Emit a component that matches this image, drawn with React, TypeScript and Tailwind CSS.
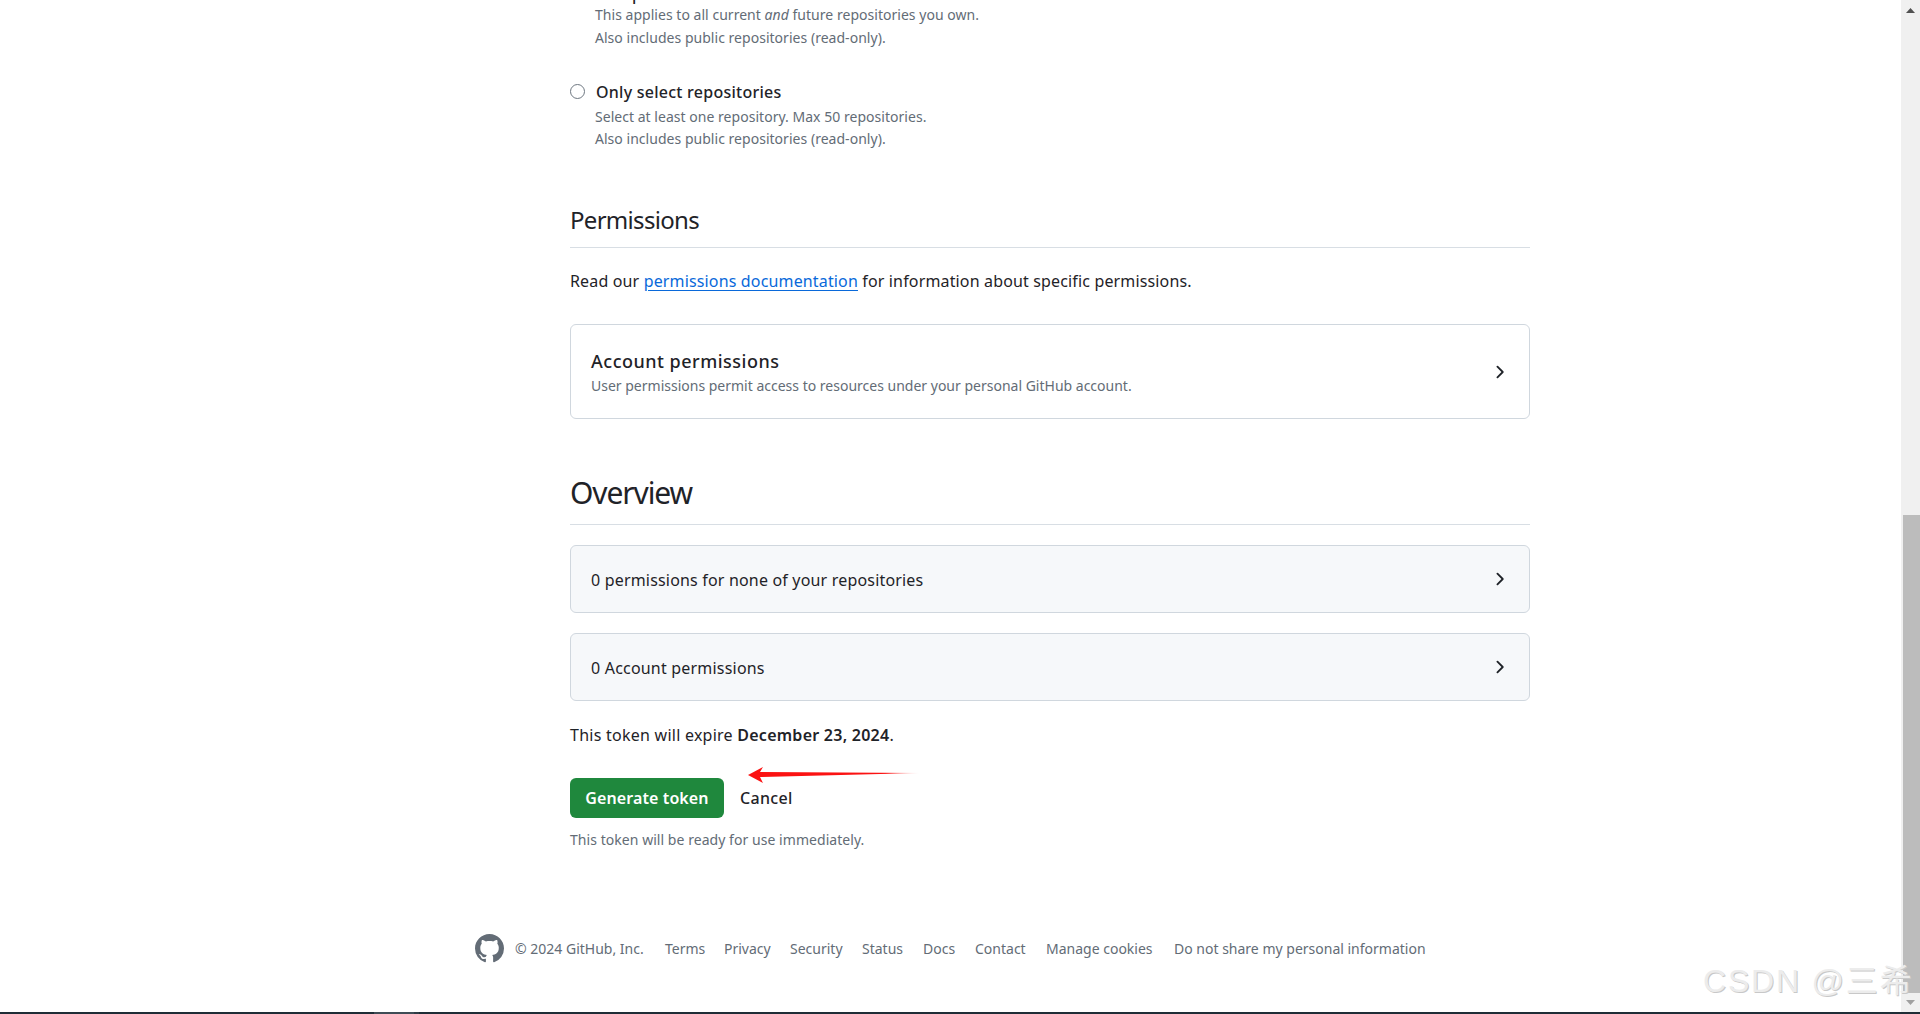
import React from "react";

const Chevron = () => (
  <svg viewBox="0 0 16 16" className="w-5 h-5 fill-[#1f2328] shrink-0">
    <path d="M6.22 3.22a.75.75 0 0 1 1.06 0l4.25 4.25a.75.75 0 0 1 0 1.06l-4.25 4.25a.751.751 0 0 1-1.042-.018.751.751 0 0 1-.018-1.042L9.94 8 6.22 4.28a.75.75 0 0 1 0-1.06Z" />
  </svg>
);

const links = [
  ["Terms", "w-[59px]"],
  ["Privacy", "w-[66px]"],
  ["Security", "w-[72px]"],
  ["Status", "w-[61px]"],
  ["Docs", "w-[52px]"],
  ["Contact", "w-[71px]"],
  ["Manage cookies", "w-[128px]"],
  ["Do not share my personal information", "w-[260px]"],
];

export default function App() {
  return (
    <div className="relative h-[1014px] overflow-hidden bg-white flex flex-col font-['Noto_Sans','Open_Sans',sans-serif] text-[#1f2328]">
      <div className="flex flex-1 min-h-0">
        <div className="flex-1 min-w-0 flex flex-col overflow-hidden">
          <div className="ml-[570px] w-[960px] -mt-[17px] flex flex-col">
            <div className="ml-[25px] text-[16px] leading-[22px] font-medium h-[21px] tracking-[-0.3px]">All repositories</div>
            <div className="ml-[25px] text-[14px] leading-[22px] text-[#636c76] tracking-[0.03px]">
              <div>This applies to all current <em>and</em> future repositories you own.</div>
              <div className="mt-[1px]">Also includes public repositories (read-only).</div>
            </div>

            <div className="mt-[32px] flex items-center h-[22px]">
              <span className="w-[15px] h-[15px] -mt-[2px] rounded-full border border-[#6e7781] bg-white shrink-0" />
              <span className="ml-[11px] text-[16px] font-medium tracking-[0.25px]">Only select repositories</span>
            </div>
            <div className="ml-[25px] mt-[3px] text-[14px] leading-[22px] text-[#636c76] tracking-[0.03px]">
              <div>Select at least one repository. Max 50 repositories.</div>
              <div>Also includes public repositories (read-only).</div>
            </div>

            <div className="mt-[49px] h-[49px] flex items-center border-b border-[#d8dee4] text-[24px] leading-[32px] tracking-[-0.7px]">
              <span className="-mt-[6px]">Permissions</span>
            </div>
            <p className="mt-[21px] text-[16px] leading-[24px] tracking-[0.15px]">
              Read our <a className="text-[#0969da] underline underline-offset-[3px]">permissions documentation</a> for information about specific permissions.
            </p>

            <div className="mt-[31px] h-[95px] rounded-md border border-[#d0d7de] pl-[20px] pr-[20px] flex items-center justify-between">
              <div className="flex flex-col gap-[3px] pt-[2px]">
                <div className="text-[18px] leading-[24px] font-medium tracking-[0.5px]">Account permissions</div>
                <div className="text-[14px] leading-[20px] text-[#636c76]">User permissions permit access to resources under your personal GitHub account.</div>
              </div>
              <Chevron />
            </div>

            <div className="mt-[54px] h-[52px] flex items-center border-b border-[#d8dee4] text-[30px] leading-[40px] tracking-[-1.1px]">
              <span className="-mt-[12px]">Overview</span>
            </div>

            <div className="mt-[20px] h-[68px] rounded-md border border-[#d0d7de] bg-[#f6f8fa] pl-[20px] pr-[20px] flex items-center justify-between text-[16px] tracking-[0.18px]">
              <span className="mt-[1px]">0 permissions for none of your repositories</span>
              <Chevron />
            </div>
            <div className="mt-[20px] h-[68px] rounded-md border border-[#d0d7de] bg-[#f6f8fa] pl-[20px] pr-[20px] flex items-center justify-between text-[16px] tracking-[0.2px]">
              <span className="mt-[1px]">0 Account permissions</span>
              <Chevron />
            </div>

            <p className="mt-[22px] text-[16px] leading-[24px] tracking-[0.25px]">
              This token will expire <strong className="font-semibold">December 23, 2024</strong>.
            </p>

            <div className="mt-[31px] flex items-center">
              <button className="w-[154px] h-[40px] rounded-md bg-[#1f883d] text-white text-[16px] font-semibold tracking-[0.1px]">Generate token</button>
              <span className="ml-[16px] text-[16px] font-medium tracking-[0.3px]">Cancel</span>
            </div>
            <p className="mt-[12px] text-[14px] leading-[20px] text-[#636c76] tracking-[0.05px]">This token will be ready for use immediately.</p>
          </div>

          <footer className="mt-[84px] ml-[475px] flex items-center text-[14px] leading-[20px] text-[#636c76]">
            <svg viewBox="0 0 16 16" className="w-[29px] h-[29px] fill-[#636c76] shrink-0">
              <path d="M8 0c4.42 0 8 3.58 8 8a8.013 8.013 0 0 1-5.45 7.59c-.4.08-.55-.17-.55-.38 0-.27.01-1.13.01-2.2 0-.75-.25-1.23-.54-1.48 1.78-.2 3.65-.88 3.65-3.95 0-.88-.31-1.59-.82-2.15.08-.2.36-1.02-.08-2.12 0 0-.67-.22-2.2.82-.64-.18-1.32-.27-2-.27-.68 0-1.36.09-2 .27-1.53-1.03-2.2-.82-2.2-.82-.44 1.1-.16 1.92-.08 2.12-.51.56-.82 1.28-.82 2.15 0 3.06 1.86 3.75 3.64 3.95-.23.2-.44.55-.51 1.07-.46.21-1.61.55-2.33-.66-.15-.24-.6-.83-1.23-.82-.67.01-.27.38.01.53.34.19.73.9.82 1.13.16.45.68 1.31 2.69.94 0 .67.01 1.3.01 1.49 0 .21-.15.45-.55.38A7.995 7.995 0 0 1 0 8c0-4.42 3.58-8 8-8Z" />
            </svg>
            <span className="ml-[11px] w-[150px] shrink-0 whitespace-nowrap">© 2024 GitHub, Inc.</span>
            {links.map(([label, w]) => (
              <a key={label} className={`${w} shrink-0 whitespace-nowrap`}>{label}</a>
            ))}
          </footer>
        </div>

        <div className="w-[19px] shrink-0 bg-[#f0f0f0] flex flex-col items-end">
          <div className="w-full h-[21px] flex items-center justify-center">
            <svg viewBox="0 0 9 5" className="w-[9px] h-[5px] fill-[#505050]"><path d="M4.5 0 9 5H0Z" /></svg>
          </div>
          <div className="mt-[494px] w-[17px] h-[478px] bg-[#bcbcbc]" />
          <div className="flex-1 w-full flex items-center justify-center">
            <svg viewBox="0 0 9 5" className="w-[9px] h-[5px] fill-[#a0a0a0]"><path d="M4.5 5 9 0H0Z" /></svg>
          </div>
        </div>
      </div>

      <div className="h-[2px] shrink-0 bg-[#1f2d36] flex">
        <div className="ml-[374px] w-[40px] bg-[#3f4c55]" />
        <div className="w-[5px] bg-[#2f3c45]" />
      </div>

      <svg viewBox="0 0 172 18" className="absolute left-[748px] top-[766px] w-[172px] h-[18px]">
        <defs>
          <linearGradient id="arrowFade" x1="0" x2="1" y1="0" y2="0">
            <stop offset="0" stopColor="#fb1212" />
            <stop offset="0.8" stopColor="#fb1212" />
            <stop offset="1" stopColor="#fb1212" stopOpacity="0.1" />
          </linearGradient>
        </defs>
        <path d="M0 9 15 1 12 6 172 7 12 11 15 17Z" fill="url(#arrowFade)" />
      </svg>

      <div className="absolute left-[1703px] top-[960px] text-[32px] leading-[42px] tracking-[1.8px] whitespace-nowrap text-[#ececec] [text-shadow:1px_1px_0_#c8c8c8] font-['Liberation_Sans','Noto_Sans_CJK_SC',sans-serif]">
        CSDN @三希
      </div>
    </div>
  );
}
